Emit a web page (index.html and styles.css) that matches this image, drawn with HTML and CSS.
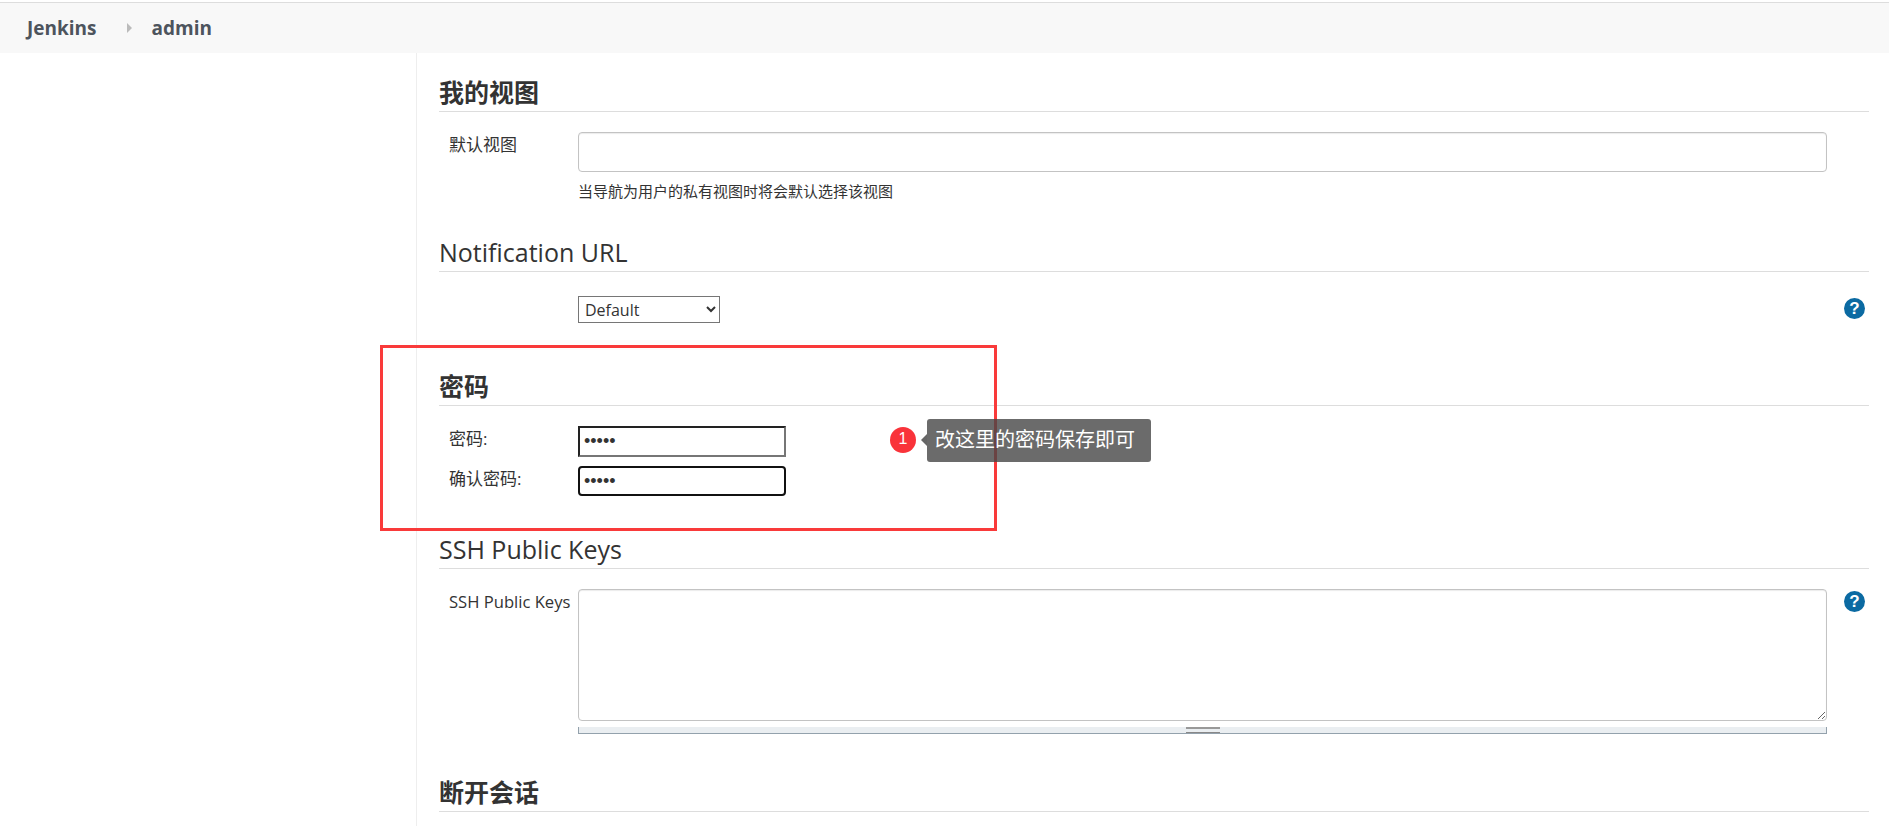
FILE: index.html
```html
<!DOCTYPE html>
<html lang="zh-CN">
    <head>
        <title>admin - Jenkins</title>
        <meta charset="UTF-8">
        <link rel="stylesheet" href="styles.css">
    </head>
    <body>
        <nav class="breadcrumb">
            <a href="#">Jenkins</a>
            <span class="crumb-arrow"></span>
            <a href="#">admin</a>
        </nav>

        <div class="page">
            <aside class="sidebar"></aside>

            <main class="content">
                <section class="section views">
                    <h2 class="cjk-title">我的视图</h2>
                    <div class="field">
                        <label class="field-label">默认视图</label>
                        <input class="text-box default-view" type="text">
                    </div>
                    <p class="hint">当导航为用户的私有视图时将会默认选择该视图</p>
                </section>

                <section class="section notify">
                    <h2>Notification URL</h2>
                    <div class="field">
                        <span></span>
                        <select class="select-box">
                            <option>Default</option>
                        </select>
                        <span class="help">?</span>
                    </div>
                </section>

                <section class="section password">
                    <h2 class="cjk-title">密码</h2>
                    <div class="field">
                        <label class="field-label">密码:</label>
                        <input class="pass-box" type="password" value="admin">
                    </div>
                    <div class="field second">
                        <label class="field-label">确认密码:</label>
                        <input class="pass-box rounded" type="password" value="admin">
                    </div>
                </section>

                <section class="section keys">
                    <h2>SSH Public Keys</h2>
                    <div class="field">
                        <label class="field-label latin-label">SSH Public Keys</label>
                        <textarea class="text-box key-area"></textarea>
                        <span class="help">?</span>
                    </div>
                    <div class="field">
                        <span></span>
                        <div class="grippie"><span></span></div>
                    </div>
                </section>

                <section class="section sessions">
                    <h2 class="cjk-title">断开会话</h2>
                </section>
            </main>
        </div>

        <!-- annotation drawn over the screenshot -->
        <div class="mark-box"></div>
        <span class="mark-badge">1</span>
        <div class="mark-tip">改这里的密码保存即可</div>
    </body>
</html>
```

FILE: styles.css
```css
html, body {
    height: 826px;
    overflow: hidden;
}
body {
    background-color: #fff;
    color: #333;
    font-family: "Open Sans", "Noto Sans CJK SC", sans-serif;
    font-size: 16px;
    margin: 0;
    padding: 0;
}
.breadcrumb {
    align-items: center;
    background-color: #f8f8f8;
    border-top: 1px solid #ddd;
    box-sizing: border-box;
    display: flex;
    height: 51px;
    margin-top: 2px;
    padding-left: 27px;
}
.breadcrumb a {
    color: #4d545d;
    font-size: 19px;
    font-weight: 700;
    text-decoration: none;
}
.crumb-arrow {
    border-bottom: 5px solid transparent;
    border-left: 5px solid #bbb;
    border-top: 5px solid transparent;
    margin: 0 20px 0 30px;
}
.page {
    display: flex;
}
.sidebar {
    border-right: 1px solid #eee;
    flex: none;
    height: 773px;
    width: 416px;
}
.content {
    flex: 1;
    padding: 0 20px 0 22px;
}
h2 {
    border-bottom: 1px solid #ddd;
    box-sizing: border-box;
    color: #333;
    font-size: 25px;
    font-weight: 400;
    height: 40px;
    line-height: 40px;
    margin: 0 0 20px;
}
.cjk-title {
    font-weight: 700;
}
.section.views {
    padding-top: 19px;
}
.section.notify {
    padding-top: 31px;
}
.section.password {
    padding-top: 43px;
}
.section.keys {
    padding-top: 33px;
}
.section.sessions {
    padding-top: 38px;
}
.field {
    display: grid;
    grid-template-columns: 139px 1249px 42px;
}
.field.second {
    margin-top: 9px;
}
.field-label {
    color: #333;
    font-size: 17px;
    line-height: 26px;
    padding-left: 10px;
    white-space: nowrap;
}
.latin-label {
    font-size: 16.6px;
}
.text-box {
    border: 1px solid #c3c3c3;
    border-radius: 4px;
    box-sizing: border-box;
    box-shadow: inset 0 1px 1px rgba(0, 0, 0, .08);
    margin: 0;
}
.default-view {
    height: 40px;
}
.hint {
    color: #333;
    font-size: 15px;
    line-height: 20px;
    margin: 9px 0 0 139px;
}
.select-box {
    background-color: #fff;
    border: 1px solid #767676;
    color: #333;
    font-family: "Open Sans", sans-serif;
    font-size: 16px;
    height: 27px;
    margin-top: 4px;
    padding-left: 2px;
    width: 142px;
}
.help {
    background-color: #0b6aa2;
    border-radius: 50%;
    color: #fff;
    font-family: "Liberation Sans", sans-serif;
    font-size: 17px;
    font-weight: 700;
    height: 21px;
    justify-self: end;
    line-height: 21px;
    margin: 6px 4px 0 0;
    text-align: center;
    width: 21px;
}
.key-area + .help {
    margin-top: 2px;
}
.pass-box {
    background-color: #fff;
    border: 2px solid #222;
    border-bottom-color: #767676;
    border-right-color: #767676;
    box-sizing: border-box;
    color: #333;
    font-size: 18px;
    height: 31px;
    margin: 0;
    padding: 0 4px;
    width: 208px;
}
.pass-box.rounded {
    border-color: #111;
    border-radius: 4px;
    height: 30px;
}
.key-area {
    display: block;
    height: 132px;
    resize: both;
    width: 100%;
}
.grippie {
    background-color: #eaeef1;
    border: 1px solid #93a1ac;
    border-top: 0;
    box-sizing: border-box;
    display: flex;
    height: 7px;
    justify-content: center;
    margin-top: 6px;
}
.grippie span {
    border-bottom: 1px solid #888;
    border-top: 2px solid #999;
    box-sizing: border-box;
    height: 6px;
    width: 34px;
}
.mark-box {
    border: 3px solid #f93a3a;
    box-sizing: border-box;
    height: 186px;
    left: 380px;
    position: absolute;
    top: 345px;
    width: 617px;
}
.mark-badge {
    background-color: #f9333a;
    border-radius: 50%;
    color: #fff;
    font-family: "Liberation Sans", sans-serif;
    font-size: 16px;
    height: 26px;
    left: 890px;
    line-height: 24px;
    position: absolute;
    text-align: center;
    top: 427px;
    width: 26px;
}
.mark-tip {
    background-color: rgba(70, 70, 70, .8);
    border-radius: 3px;
    box-sizing: border-box;
    color: #fff;
    font-size: 20px;
    height: 43px;
    left: 927px;
    line-height: 41px;
    padding-left: 8px;
    position: absolute;
    top: 419px;
    white-space: nowrap;
    width: 224px;
}
.mark-tip::before {
    border-bottom: 6px solid transparent;
    border-right: 6px solid #666;
    border-top: 6px solid transparent;
    content: "";
    left: -6px;
    position: absolute;
    top: 15px;
}
```
